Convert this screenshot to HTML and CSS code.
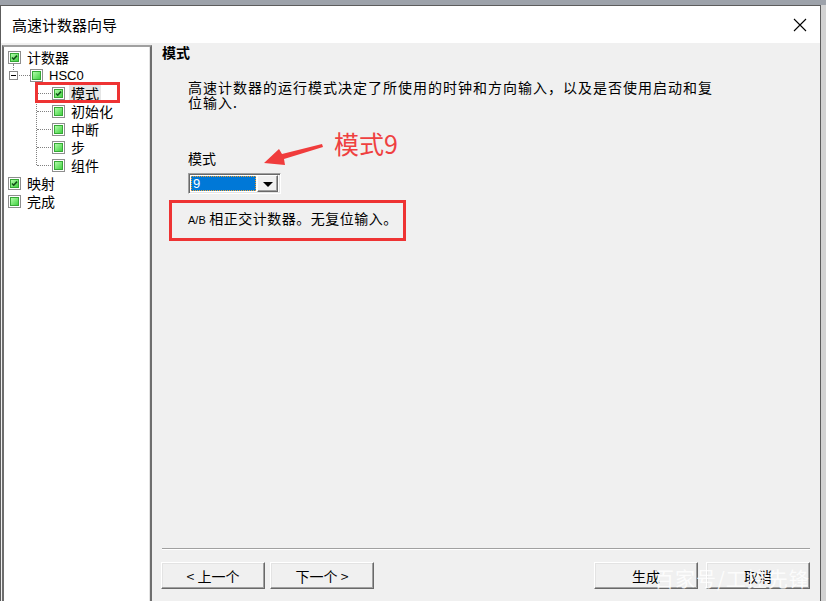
FILE: index.html
```html
<!DOCTYPE html>
<html lang="zh-CN">
<head>
    <meta charset="UTF-8">
    <title>高速计数器向导</title>
    <link rel="stylesheet" href="styles.css">
</head>
<body>
    <svg class="defs" width="0" height="0">
        <defs>
            <linearGradient id="green" x1="0" y1="0" x2="1" y2="1">
                <stop offset="0" stop-color="#b8ffb0"/>
                <stop offset="1" stop-color="#3ccf3c"/>
            </linearGradient>
        </defs>
        <symbol id="box" viewBox="0 0 13 13">
            <rect x="0.5" y="0.5" width="12" height="12" fill="#fff" stroke="#8e8e8e"/>
            <rect x="2.5" y="2.5" width="8" height="8" fill="url(#green)" stroke="#36a836"/>
        </symbol>
        <symbol id="boxc" viewBox="0 0 13 13">
            <rect x="0.5" y="0.5" width="12" height="12" fill="#fff" stroke="#8e8e8e"/>
            <rect x="2.5" y="2.5" width="8" height="8" fill="url(#green)" stroke="#36a836"/>
            <path d="M4 6.5 L5.7 8.2 L9 4.6" fill="none" stroke="#14501a" stroke-width="1.6"/>
        </symbol>
    </svg>

    <div class="window">
        <div class="titlebar">
            <span class="title">高速计数器向导</span>
            <svg class="close" width="14" height="14" viewBox="0 0 14 14">
                <path d="M1 1 L13 13 M13 1 L1 13" stroke="#000" stroke-width="1.1"/>
            </svg>
        </div>

        <div class="body">
            <div class="tree">
                <div class="row lvl0"><svg class="ico"><use href="#boxc"/></svg><span>计数器</span></div>
                <div class="row lvl1"><span class="exp"></span><svg class="ico"><use href="#box"/></svg><span class="latin">HSC0</span></div>
                <div class="children">
                    <div class="row lvl2 sel"><svg class="ico"><use href="#boxc"/></svg><span class="label">模式</span></div>
                    <div class="row lvl2"><svg class="ico"><use href="#box"/></svg><span class="label">初始化</span></div>
                    <div class="row lvl2"><svg class="ico"><use href="#box"/></svg><span class="label">中断</span></div>
                    <div class="row lvl2"><svg class="ico"><use href="#box"/></svg><span class="label">步</span></div>
                    <div class="row lvl2"><svg class="ico"><use href="#box"/></svg><span class="label">组件</span></div>
                </div>
                <div class="row lvl0"><svg class="ico"><use href="#boxc"/></svg><span>映射</span></div>
                <div class="row lvl0"><svg class="ico"><use href="#box"/></svg><span>完成</span></div>
            </div>

            <div class="main">
                <div class="content">
                    <h2>模式</h2>
                    <p class="desc">高速计数器的运行模式决定了所使用的时钟和方向输入，以及是否使用启动和复<br>位输入.</p>
                    <div class="field-label">模式</div>
                    <div class="combo">
                        <div class="combo-value"><span>9</span></div>
                        <div class="combo-btn"></div>
                    </div>
                    <div class="info"><span class="ab">A/B</span> 相正交计数器。无复位输入。</div>

                    <div class="note">模式9</div>
                    <svg class="arrow" width="64" height="28" viewBox="0 0 64 28">
                        <polygon points="3,23 18,9 21,14 61,4 62,7 23,19 24,25" fill="#f03c3c"/>
                    </svg>
                </div>

                <div class="footer">
                    <button class="btn">&lt; 上一个</button>
                    <button class="btn next">下一个 &gt;</button>
                    <button class="btn push">生成</button>
                    <button class="btn">取消</button>
                    <div class="watermark">百家号/工控先锋</div>
                </div>
            </div>
        </div>
    </div>
</body>
</html>
```

FILE: styles.css
```css
html, body {
    margin: 0;
    height: 100%;
}
body {
    background: linear-gradient(#9da2aa 0, #9da2aa 5px, #d2d2d2 5px);
    font-family: "Noto Sans CJK SC", "Noto Sans", sans-serif;
    font-size: 14px;
    color: #000;
    overflow: hidden;
}
.defs {
    position: absolute;
}
.window {
    margin-top: 5px;
    width: 821px;
    height: 596px;
    box-sizing: border-box;
    border-top: 1px solid #5c5c5c;
    border-left: 1px solid #5c5c5c;
    border-right: 1px solid #5c5c5c;
    background: #f0f0f0;
    display: flex;
    flex-direction: column;
}
.titlebar {
    height: 37px;
    background: #fff;
    display: flex;
    align-items: center;
    padding: 0 13px 0 11px;
    flex-shrink: 0;
}
.title {
    font-size: 15px;
    flex: 1;
}
.close {
    margin-top: 1px;
}
.body {
    flex: 1;
    display: flex;
    padding-top: 2px;
    padding-left: 1px;
    min-height: 0;
}

/* tree */
.tree {
    width: 146px;
    background: #fff;
    border-left: 2px solid #6e6e6e;
    border-top: 2px solid #a0a0a0;
    border-right: 2px solid #6e6e6e;
    box-shadow: inset -1px 0 #e3e3e3;
    padding-top: 1px;
    flex-shrink: 0;
}
.row {
    height: 18px;
    display: flex;
    align-items: center;
    position: relative;
    white-space: nowrap;
}
.ico {
    width: 13px;
    height: 13px;
    flex-shrink: 0;
}
.lvl0 {
    padding-left: 4px;
}
.lvl0 .ico {
    margin-right: 6px;
}
.lvl1 {
    padding-left: 5px;
}
.latin {
    font-family: "Liberation Sans", sans-serif;
    font-size: 13px;
    margin-left: 6px;
}
.exp {
    width: 7px;
    height: 7px;
    border: 1px solid #8a8a8a;
    margin-right: 12px;
    position: relative;
    background: #fff;
}
.exp::after {
    content: '';
    position: absolute;
    left: 1px;
    top: 3px;
    width: 5px;
    border-top: 1px solid #000;
}
.exp::before {
    content: '';
    position: absolute;
    left: 3px;
    top: -8px;
    height: 6px;
    border-left: 1px dotted #808080;
}
.lvl1::after {
    content: '';
    position: absolute;
    left: 15px;
    top: 9px;
    width: 11px;
    border-top: 1px dotted #808080;
}
.children {
    position: relative;
}
.children::before {
    content: '';
    position: absolute;
    left: 32px;
    top: 0;
    height: calc(100% - 9px);
    border-left: 1px dotted #808080;
}
.lvl2 {
    padding-left: 48px;
}
.lvl2::before {
    content: '';
    position: absolute;
    left: 33px;
    top: 9px;
    width: 14px;
    border-top: 1px dotted #808080;
}
.lvl2 .ico {
    margin-right: 4px;
}
.label {
    padding: 0 2px;
}
.sel .label {
    background: #e6e6e6;
}
.sel::after {
    content: '';
    position: absolute;
    left: 31px;
    top: -2px;
    width: 85px;
    height: 21px;
    box-sizing: border-box;
    border: 3px solid #ee3333;
}

/* main */
.main {
    flex: 1;
    display: flex;
    flex-direction: column;
    min-width: 0;
}
.content {
    flex: 1;
    position: relative;
    padding-left: 10px;
}
h2 {
    margin: 0;
    font-size: 14px;
    font-weight: bold;
    line-height: 14px;
}
.desc {
    margin: 21px 0 0 26px;
    line-height: 15px;
    letter-spacing: 1px;
}
.field-label {
    margin: 41px 0 0 26px;
    line-height: 15px;
}
.combo {
    margin: 7px 0 0 26px;
    width: 93px;
    height: 21px;
    box-sizing: border-box;
    border-top: 1px solid #a0a0a0;
    border-left: 1px solid #a0a0a0;
    border-right: 1px solid #fff;
    border-bottom: 1px solid #fff;
    box-shadow: inset 1px 1px #696969, inset -1px -1px #e3e3e3;
    padding: 2px 2px 2px 2px;
    display: flex;
    background: #fff;
}
.combo-value {
    flex: 1;
    background: #0078d7;
    border: 1px dotted #f0a030;
    color: #fff;
    font-family: "Liberation Sans", sans-serif;
    font-size: 13px;
    line-height: 13px;
    padding-left: 1px;
}
.combo-btn {
    width: 21px;
    margin: -1px 0 -1px 1px;
    background: #f0f0f0;
    box-sizing: border-box;
    border-top: 1px solid #fff;
    border-left: 1px solid #fff;
    border-right: 1px solid #696969;
    border-bottom: 1px solid #696969;
    box-shadow: inset -1px -1px #a0a0a0;
    position: relative;
}
.combo-btn::after {
    content: '';
    position: absolute;
    left: 5px;
    top: 6px;
    border-left: 5px solid transparent;
    border-right: 5px solid transparent;
    border-top: 5px solid #000;
}
.info {
    margin: 6px 0 0 7px;
    width: 237px;
    height: 41px;
    box-sizing: border-box;
    border: 3px solid #ee3333;
    padding: 8px 0 0 16px;
    line-height: 15px;
    letter-spacing: 0.5px;
}
.ab {
    font-family: "Liberation Sans", sans-serif;
    font-size: 11px;
    letter-spacing: 0;
}
.note {
    position: absolute;
    left: 182px;
    top: 82px;
    color: #ef4040;
    font-size: 25px;
    line-height: 32px;
}
.arrow {
    position: absolute;
    left: 109px;
    top: 95px;
}

/* footer */
.footer {
    height: 53px;
    flex-shrink: 0;
    margin: 0 10px;
    border-top: 1px solid #a0a0a0;
    box-shadow: inset 0 1px #fff;
    display: flex;
    align-items: flex-start;
    padding-top: 13px;
    box-sizing: border-box;
    position: relative;
}
.btn {
    width: 104px;
    height: 27px;
    background: #f0f0f0;
    font-family: "Noto Sans CJK SC", sans-serif;
    font-size: 14px;
    padding: 0;
    border-top: 1px solid #fff;
    border-left: 1px solid #fff;
    border-right: 1px solid #696969;
    border-bottom: 1px solid #696969;
    box-shadow: inset -1px -1px #a0a0a0, inset 1px 1px #e3e3e3;
    color: #000;
}
.footer .btn:first-child {
    margin-left: -1px;
}
.next {
    margin-left: 5px;
}
.push {
    margin-left: auto;
    margin-right: 8px;
}
.watermark {
    position: absolute;
    left: 492px;
    top: 18px;
    font-size: 20px;
    line-height: 24px;
    color: rgba(255, 255, 255, 0.85);
    letter-spacing: 1px;
    pointer-events: none;
}
```
